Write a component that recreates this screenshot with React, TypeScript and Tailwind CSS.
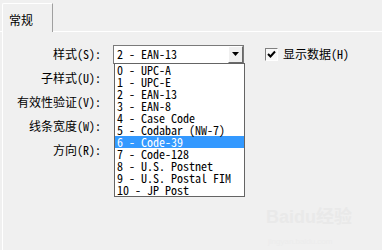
import React from "react";

const FONT = { fontFamily: '"Noto Sans Mono CJK SC", "Noto Sans CJK SC", "DejaVu Sans Mono", monospace' };

const items = [
  "0 - UPC-A",
  "1 - UPC-E",
  "2 - EAN-13",
  "3 - EAN-8",
  "4 - Case Code",
  "5 - Codabar (NW-7)",
  "6 - Code-39",
  "7 - Code-128",
  "8 - U.S. Postnet",
  "9 - U.S. Postal FIM",
  "10 - JP Post",
];

const labels = ["样式(S):", "子样式(U):", "有效性验证(V):", "线条宽度(W):", "方向(R):"];

export default function App() {
  return (
    <div className="relative w-[382px] h-[250px] overflow-hidden bg-[#f0f0f0] text-[12px] leading-[12px] text-black" style={FONT}>
      {/* tab strip */}
      <div className="flex h-[32px] items-end">
        <div className="w-[2px] h-[1px] bg-white" />
        <div className="w-[51px] h-[29px] border-l border-t border-white border-r border-r-[#a0a0a0] rounded-tl-[2px] flex items-start pl-[6px] pt-[10px]">
          常规
        </div>
        <div className="flex-1 h-[1px] bg-white" />
      </div>
      {/* panel */}
      <div className="relative ml-[2px] border-l border-white h-[218px]">
        <div className="flex flex-col pt-[10px]">
          {labels.map((l, i) => (
            <div key={l} className="flex h-[24px] items-center">
              <div className="w-[98px] text-right whitespace-nowrap">{l}</div>
              {i === 0 && (
                <>
                  <div className="ml-[12px] w-[131px] h-[19px] border border-[#7a7a7a] bg-white flex items-center">
                    <span className="pl-[3px] flex-1 whitespace-pre">2 - EAN-13</span>
                    <div className="w-[15px] h-[17px] bg-[#f0f0f0] border-t border-l border-white border-r border-b border-r-[#696969] border-b-[#696969] flex items-center justify-center">
                      <svg width="7" height="4" viewBox="0 0 7 4">
                        <path d="M0 0H7L3.5 4Z" fill="#000" />
                      </svg>
                    </div>
                  </div>
                  <div className="ml-[21px] w-[13px] h-[13px] border border-t-[#808080] border-l-[#808080] border-r-white border-b-white bg-[#f8f8f8] flex items-center justify-center">
                    <svg width="9" height="9" viewBox="0 0 9 9">
                      <path d="M1 4L3.5 6.5L8 1.5" stroke="#000" strokeWidth="2" fill="none" />
                    </svg>
                  </div>
                  <span className="ml-[5px] whitespace-nowrap">显示数据(H)</span>
                </>
              )}
            </div>
          ))}
        </div>
        {/* dropdown list */}
        <div className="absolute left-[111px] top-[31px] w-[131px] h-[134px] border border-[#646464] bg-white">
          {items.map((t) => (
            <div
              key={t}
              className={
                "h-[12px] leading-[12px] pl-[2px] whitespace-pre " +
                (t === "6 - Code-39" ? "bg-[#3399ff] text-white" : "")
              }
            >
              {t}
            </div>
          ))}
        </div>
        {/* watermark */}
        <div className="absolute left-[263px] top-[176px] text-[#e9e9e9] text-[18px] leading-[18px] font-bold" style={{ fontFamily: '"Liberation Sans", "Noto Sans CJK SC", sans-serif' }}>
          Baidu经验
        </div>
        <div className="absolute left-[265px] top-[206px] text-[#ececec] text-[8px] leading-[8px]" style={{ fontFamily: '"Liberation Sans", sans-serif' }}>
          jingyan.baidu.com
        </div>
      </div>
    </div>
  );
}
